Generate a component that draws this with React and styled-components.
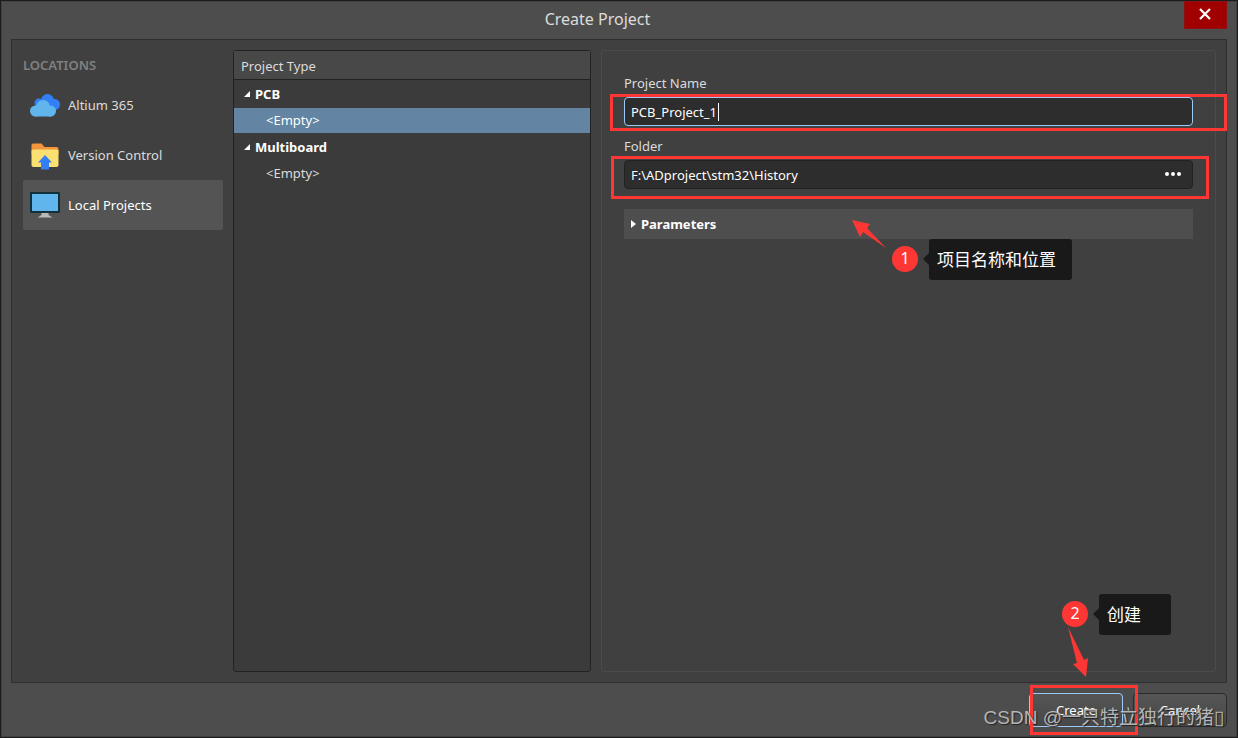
import React, { useState } from "react";
import styled, { createGlobalStyle, css } from "styled-components";

const GlobalStyle = createGlobalStyle`
  *, *::before, *::after { box-sizing: border-box; }
  body {
    margin: 0;
    background: #4d4d4d;
    color: #dcdcdc;
    font: 13px/18px "Noto Sans", "Noto Sans CJK SC", sans-serif;
  }
  button, input { font: inherit; color: inherit; }
`;

const accent = "#fe3735";

const Dialog = styled.main`
  position: relative;
  display: flex;
  flex-direction: column;
  min-height: 100vh;
  padding: 0 10px;
  border: 1px solid #1c1c1c;
  box-shadow: inset 0 0 0 1px #404040;
  background: #4d4d4d;
`;

const TitleBar = styled.header`
  display: flex;
  align-items: flex-start;
  height: 38px;
`;

const Title = styled.h1`
  flex: 1;
  margin: 0;
  font-size: 16px;
  line-height: 36px;
  font-weight: 400;
  text-align: center;
`;

const CloseButton = styled.button`
  display: flex;
  align-items: center;
  justify-content: center;
  width: 43px;
  height: 28px;
  padding: 0 1px 2px 0;
  border: 1px solid #8d0f0f;
  background: #a00000;
  color: #fff;
`;

const Body = styled.div`
  flex: 1;
  display: flex;
  gap: 10px;
  padding: 10px;
  border: 1px solid #2f2f2f;
  background: #404040;
`;

const Locations = styled.nav`
  width: 201px;
  padding-left: 1px;
`;

const LocationsTitle = styled.h2`
  margin: 0;
  height: 30px;
  font-size: 13px;
  line-height: 30px;
  font-weight: 600;
  color: #808080;
`;

const LocationButton = styled.button`
  display: flex;
  align-items: center;
  gap: 8px;
  width: 100%;
  height: 50px;
  padding: 0 7px;
  border: 0;
  border-radius: 2px;
  background: ${(p) => (p.$active ? "#545454" : "transparent")};
  color: ${(p) => (p.$active ? "#fff" : "#dcdcdc")};
  text-align: left;
`;

const Tree = styled.section`
  width: 358px;
  border: 1px solid #222;
  border-radius: 3px;
  background: #3b3b3b;
`;

const TreeHeader = styled.h2`
  margin: 0;
  height: 29px;
  padding: 0 7px;
  border-bottom: 1px solid #222;
  background: #484848;
  font-size: 13px;
  line-height: 30px;
  font-weight: 400;
`;

const treeRow = css`
  display: flex;
  align-items: center;
  width: 100%;
  border: 0;
  text-align: left;
`;

const GroupRow = styled.button`
  ${treeRow}
  gap: 5px;
  height: 28px;
  padding: 0 10px;
  background: none;
  color: #fff;
  font-weight: 700;
`;

const ItemRow = styled.button`
  ${treeRow}
  height: 25px;
  padding: 0 32px 2px;
  background: ${(p) => (p.$selected ? "#6384a3" : "transparent")};
  color: ${(p) => (p.$selected ? "#fff" : "#dcdcdc")};
`;

const Form = styled.form`
  position: relative;
  flex: 1;
  min-width: 0;
  padding: 22px;
  border: 1px solid #4b4b4b;
  border-radius: 3px;
`;

const Field = styled.div`
  margin-bottom: 10px;
`;

const Label = styled.label`
  display: block;
  height: 24px;
  line-height: 20px;
`;

const InputBox = styled.div`
  position: relative;
  display: flex;
  align-items: center;
  height: 29px;
  border: 1px solid ${(p) => (p.$focused ? "#9cc9f8" : "#222")};
  border-radius: 4px;
  background: #2d2d2d;
`;

const TextInput = styled.input`
  flex: 1;
  min-width: 0;
  height: 100%;
  padding: 0 6px;
  border: 0;
  outline: 0;
  background: none;
  color: #fff;
`;

const Caret = styled.span`
  position: absolute;
  left: 93px;
  top: 5px;
  width: 1px;
  height: 18px;
  background: #fff;
`;

const BrowseButton = styled.button`
  display: flex;
  padding: 0 11px 2px;
  border: 0;
  background: none;
  color: #fff;
`;

const Parameters = styled.button`
  display: flex;
  align-items: center;
  gap: 5px;
  width: 100%;
  height: 30px;
  margin-top: 20px;
  padding: 0 7px;
  border: 0;
  background: #4e4e4e;
  color: #fff;
  font-weight: 700;
`;

const Footer = styled.footer`
  display: flex;
  justify-content: flex-end;
  gap: 10px;
  padding: 10px 0;
`;

const ButtonSlot = styled.div`
  position: relative;
`;

const FooterButton = styled.button`
  width: 94px;
  height: 34px;
  border: 1px solid ${(p) => (p.$primary ? "#9cc9f8" : "#2b2b2b")};
  border-radius: 4px;
  background: linear-gradient(#555, #484848);
  color: #fff;
`;

const Highlight = styled.div`
  position: absolute;
  z-index: 1;
  inset: ${(p) => p.$inset};
  border: 3px solid ${accent};
  pointer-events: none;
`;

const Callout = styled.div`
  position: absolute;
  z-index: 2;
  inset: ${(p) => p.$inset};
  display: flex;
  align-items: flex-start;
  gap: 11px;
`;

const Badge = styled.span`
  width: 26px;
  height: 26px;
  margin-top: 7px;
  border-radius: 50%;
  background: ${accent};
  color: #fff;
  font-size: 16px;
  line-height: 24px;
  text-align: center;
`;

const Bubble = styled.span`
  position: relative;
  width: ${(p) => p.$width};
  height: 41px;
  padding-left: 8px;
  border-radius: 3px;
  background: #191919;
  color: #fff;
  font: 17px/39px "Noto Sans CJK SC", sans-serif;

  &::before {
    content: "";
    position: absolute;
    right: 100%;
    top: 14px;
    border: solid transparent;
    border-width: 6px 6px 6px 0;
    border-right-color: #191919;
  }
`;

const Arrow = styled.svg`
  position: absolute;
  inset: ${(p) => p.$inset};
  fill: ${accent};
`;

const Watermark = styled.div`
  position: absolute;
  z-index: 3;
  right: 13px;
  bottom: 6px;
  color: rgba(205, 205, 205, 0.85);
  font: 19px/26px "Liberation Sans", "Noto Sans CJK SC", sans-serif;
  text-shadow: 1px 1px 1px #222;
  white-space: nowrap;
  pointer-events: none;
`;

const CloudIcon = () => (
  <svg width="30" height="30" viewBox="0 0 30 30" aria-hidden="true">
    <g fill="#347ff6">
      <circle cx="17.500" cy="10.500" r="6.500" />
      <circle cx="9" cy="13" r="4.500" />
      <circle cx="24.500" cy="14.500" r="5.500" />
      <rect x="9" y="11" width="15" height="8" />
    </g>
    <g fill="#60b6ec">
      <circle cx="13" cy="17" r="7" />
      <circle cx="5.500" cy="21" r="5.500" />
      <circle cx="20.500" cy="21" r="5.500" />
      <rect x="5" y="18" width="16" height="8.500" />
    </g>
  </svg>
);

const FolderIcon = () => (
  <svg width="30" height="30" viewBox="0 0 30 30" aria-hidden="true">
    <path d="M1.500 5q0-1.500 1.500-1.500h8.500l3 3.500h12q2 0 2 2v5h-27z" fill="#f3953a" />
    <path d="M1.500 11q0-1.500 2-1.500h23q2 0 2 1.500v14q0 2-2 2h-23q-2 0-2-2z" fill="#fadf71" />
    <path d="M15 15l7 7.500h-3V29.500h-8v-7H8z" fill="#347ff6" />
  </svg>
);

const MonitorIcon = () => (
  <svg width="30" height="30" viewBox="0 0 30 30" aria-hidden="true">
    <rect y="2" width="30" height="21" rx="1" fill="#10303c" />
    <rect x="2" y="4" width="26" height="17" fill="#60b6ec" />
    <path d="M11.500 23h7v2l4 2.500H7.500l4-2.500z" fill="#b9b9b9" />
  </svg>
);

const ExpandedMark = () => (
  <svg width="6" height="6" viewBox="0 0 6 6" aria-hidden="true">
    <path d="M6 0v6H0z" fill="#fff" />
  </svg>
);

const CollapsedMark = () => (
  <svg width="5" height="8" viewBox="0 0 5 8" aria-hidden="true">
    <path d="M0 0l5 4-5 4z" fill="#fff" />
  </svg>
);

const locations = [
  { name: "Altium 365", Icon: CloudIcon },
  { name: "Version Control", Icon: FolderIcon },
  { name: "Local Projects", Icon: MonitorIcon },
];

const projectGroups = ["PCB", "Multiboard"];

export default function App() {
  const [location, setLocation] = useState("Local Projects");
  const [group, setGroup] = useState("PCB");
  const [name, setName] = useState("PCB_Project_1");
  const [folder, setFolder] = useState("F:\\ADproject\\stm32\\History");

  return (
    <>
      <GlobalStyle />
      <Dialog>
        <TitleBar>
          <Title>Create Project</Title>
          <CloseButton type="button" aria-label="Close">
            <svg width="12" height="12" viewBox="0 0 12 12" aria-hidden="true">
              <path d="M1 1l10 10M11 1L1 11" stroke="currentColor" strokeWidth="2.200" />
            </svg>
          </CloseButton>
        </TitleBar>

        <Body>
          <Locations>
            <LocationsTitle>LOCATIONS</LocationsTitle>
            {locations.map(({ name: label, Icon }) => (
              <LocationButton
                key={label}
                type="button"
                $active={label === location}
                onClick={() => setLocation(label)}
              >
                <Icon />
                {label}
              </LocationButton>
            ))}
          </Locations>

          <Tree>
            <TreeHeader>Project Type</TreeHeader>
            {projectGroups.map((label) => (
              <React.Fragment key={label}>
                <GroupRow type="button" aria-expanded="true">
                  <ExpandedMark />
                  {label}
                </GroupRow>
                <ItemRow type="button" $selected={label === group} onClick={() => setGroup(label)}>
                  {"<Empty>"}
                </ItemRow>
              </React.Fragment>
            ))}
          </Tree>

          <Form id="project" onSubmit={(e) => e.preventDefault()}>
            <Field>
              <Label htmlFor="name">Project Name</Label>
              <InputBox $focused>
                <TextInput id="name" value={name} onChange={(e) => setName(e.target.value)} />
                <Caret />
                <Highlight $inset="-4px -35px -6px -15px" />
              </InputBox>
            </Field>
            <Field>
              <Label htmlFor="folder">Folder</Label>
              <InputBox>
                <TextInput id="folder" value={folder} onChange={(e) => setFolder(e.target.value)} />
                <BrowseButton type="button" aria-label="Browse">
                  <svg width="16" height="4" viewBox="0 0 16 4" fill="currentColor" aria-hidden="true">
                    <circle cx="2" cy="2" r="2" />
                    <circle cx="8" cy="2" r="2" />
                    <circle cx="14" cy="2" r="2" />
                  </svg>
                </BrowseButton>
                <Highlight $inset="-5px -17px -11px -14px" />
              </InputBox>
            </Field>
            <Parameters type="button" aria-expanded="false">
              <CollapsedMark />
              Parameters
            </Parameters>

            <Callout $inset="188px 143px auto auto">
              <Arrow $inset="-19px auto auto -40px" width="34" height="28" viewBox="0 0 34 28">
                <path d="M0 0l18 4-3 4 19 20-23-16-3 5z" />
              </Arrow>
              <Badge>1</Badge>
              <Bubble $width="143px">项目名称和位置</Bubble>
            </Callout>
            <Callout $inset="auto 44px 36px auto">
              <Arrow $inset="33px auto auto 6px" width="20" height="50" viewBox="0 0 20 50">
                <path d="M0 0l16 33 4-2-2 19L5 37l4-1z" />
              </Arrow>
              <Badge>2</Badge>
              <Bubble $width="72px">创建</Bubble>
            </Callout>
          </Form>
        </Body>

        <Footer>
          <ButtonSlot>
            <FooterButton type="submit" form="project" $primary>
              Create
            </FooterButton>
            <Highlight $inset="-8px -15px -8px 1px" />
          </ButtonSlot>
          <FooterButton type="button">Cancel</FooterButton>
        </Footer>
        <Watermark>CSDN @一只特立独行的猪▯</Watermark>
      </Dialog>
    </>
  );
}
